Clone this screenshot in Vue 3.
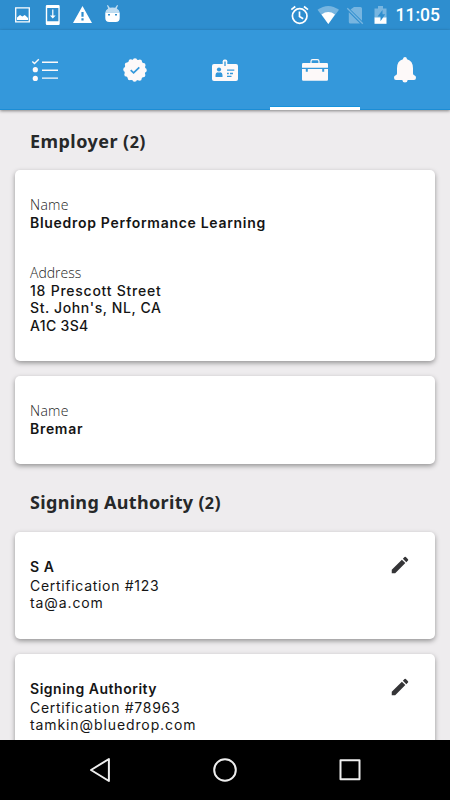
<template>
  <div class="screen">
    <!-- Status bar -->
    <header class="status-bar">
      <svg width="450" height="30" viewBox="0 0 450 30" fill="#fff">
        <path fill="none" stroke="#fff" stroke-width="1.3" d="M15.7 7.9h13.6v14H15.7z" />
        <path d="M17 20v-2.5l3-2.5 2.3 1.5 2.5-1.5 3.2 3v2z" />
        <path fill-rule="evenodd" d="M47 5h11.5q1.2 0 1.2 1.2v17.6q0 1.2-1.2 1.2H47q-1.2 0-1.2-1.2V6.200q0-1.200 1.200-1.200zm.2 3v13.300h11.200V8z" />
        <path d="M52.200 9.500h1.200v6h2.300l-2.900 3-2.900-3h2.300z" />
        <path fill-rule="evenodd" d="M82.500 6l9.500 17H73zM81.400 12v4.700h2.200V12zm0 6.200v2.200h2.200v-2.200z" />
        <path opacity=".7" d="M105.300 12.500q.2-2.600 2.900-4L107 5.500l.9-.4 1.900 2.700q2.700-.7 5.400 0l1.900-2.700.9.400-1.200 3q2.700 1.400 2.900 4z" />
        <path fill-rule="evenodd" d="M105.300 12.500h14.400V18q0 4-4 4h-6.400q-4 0-4-4zM108 13.900v1.600h2v-1.600zm7 0v1.600h2v-1.600z" />

        <g fill="none" stroke="#fff" stroke-width="1.700">
          <circle cx="299.700" cy="16" r="7.300" />
          <path d="M299.500 11.500v5l3.700 2.200M291.300 9.700l4-3.200M308 9.700l-4-3.200" />
        </g>
        <path opacity=".35" d="M317.500 9.800Q328.300 2.200 339 9.800L328.300 24z" />
        <path d="M321.500 14.500q6.800-4.800 13.500 0L328.300 24z" />
        <path opacity=".35" d="M354 7h6.500q1.500 0 1.500 1.500v12.300L350.500 9.600zM348.800 12.200L360 23.500h-9.700q-1.500 0-1.500-1.500z" />
        <path opacity=".35" fill="none" stroke="#fff" stroke-width="1.300" d="M347.300 8.300l15.500 15.500" />
        <path opacity=".35" d="M374.500 8.500H378V6h5v2.500h3.500V18h-12z" />
        <path d="M374.500 17.500h12v6.300h-12z" />
        <path fill="#2e8ecf" d="M382.500 10v4.200h2.700l-4.700 7v-4.700h-3z" />
      </svg>
      <span class="status-bar__clock">11:05</span>
    </header>

    <!-- Tabs -->
    <nav class="tabs">
      <a v-for="tab in tabs" :key="tab" :class="['tab', { active: tab === activeTab }]" @click="activeTab = tab">
        <svg v-if="tab === 'list'" width="28" height="28" viewBox="0 0 28 28" fill="#fdf9f9">
          <path fill="none" stroke="#fdf9f9" stroke-width="1.400" d="M1.300 5.500l2.200 2.100 4.300-4.300M11 6.300h16M11 14.200h16M11 22.100h16" />
          <circle cx="4.300" cy="13.700" r="2.600" />
          <circle cx="4.300" cy="22.400" r="2.600" />
        </svg>
        <svg v-else-if="tab === 'badge'" width="28" height="28" viewBox="0 0 28 28" fill="#fdf9f9">
          <circle cx="14" cy="14" r="10.600" />
          <path fill="none" stroke="#fdf9f9" stroke-width="4.400" stroke-linecap="round" stroke-dasharray="0 5.027" d="M14 4.400a9.600 9.600 0 1 1-.01 0z" />
          <path fill="none" stroke="#3498db" stroke-width="1.700" d="M9.700 14.200l2.900 2.700 5.700-5.600" />
        </svg>
        <svg v-else-if="tab === 'card'" width="28" height="28" viewBox="0 0 28 28">
          <rect x="1" y="8" width="26" height="17" rx="2" fill="#fdf9f9" />
          <rect x="11.700" y="3.500" width="4.600" height="7.200" rx="1.800" fill="#fdf9f9" />
          <path stroke="#3498db" stroke-width="1.300" d="M14 5.500v4.500M16 14.200h7.300M16 17.500h1.800M19 17.500h3M16 20.300h4.500" />
          <circle cx="8" cy="13.500" r="2.100" fill="#3498db" />
          <path fill="#3498db" d="M4.500 20.900v-2q0-2.400 2.300-2.700 1.200.5 2.400 0 2.300.3 2.300 2.700v2z" />
        </svg>
        <svg v-else-if="tab === 'case'" width="28" height="28" viewBox="0 0 28 28" fill="#fdf9f9">
          <path fill="none" stroke="#fdf9f9" stroke-width="1.200" d="M10 7V5.400Q10 3.700 11.700 3.700h4.600Q18 3.700 18 5.400V7" />
          <path d="M2.200 7h23.600Q27 7 27 8.200v3.600H1V8.200Q1 7 2.200 7z" />
          <path d="M1 13h3.800v2.800h2V13h14.400v2.800h2V13H27v10.500q0 1.200-1.200 1.200H2.200Q1 24.700 1 23.500z" />
        </svg>
        <svg v-else width="28" height="28" viewBox="0 0 28 28" fill="#fdf9f9">
          <path d="M14 1.100q1.700 0 2.100 2.100 5.900 1.700 5.900 9v5.300q0 1.700 1.700 1.900 1.300.4 1.300 2.300 0 2.300-2 2.300h-6.300q-.3 2.600-2.700 2.600T11.300 24H5q-2 0-2-2.300 0-1.900 1.300-2.300Q6 19.200 6 17.500v-5.300q0-7.300 5.900-9 .4-2.100 2.100-2.100z" />
        </svg>
      </a>
    </nav>

    <main class="content">
      <h2 class="heading heading--employer">Employer (<span>2</span>)</h2>

      <article v-for="employer in employers" :key="employer.name" class="card">
        <div class="field">
          <p class="field__label field__label--name">Name</p>
          <p class="field__value">{{ employer.name }}</p>
        </div>
        <div v-if="employer.address" class="field">
          <p class="field__label">Address</p>
          <p v-for="line in employer.address" :key="line" class="field__value field__value--line">{{ line }}</p>
        </div>
      </article>

      <h2 class="heading heading--authority">Signing Authority (<span>2</span>)</h2>

      <article v-for="authority in authorities" :key="authority.email" class="card card--authority">
        <div>
          <p class="authority__name">{{ authority.name }}</p>
          <p class="authority__line">Certification #{{ authority.certification }}</p>
          <p class="authority__line authority__line--email">{{ authority.email }}</p>
        </div>
        <svg class="edit" width="22" height="22" viewBox="0 0 24 24" fill="#353537">
          <path d="M3 17.250V21h3.750L17.810 9.940l-3.750-3.750L3 17.250zM20.710 7.040a1 1 0 0 0 0-1.410l-2.340-2.340a1 1 0 0 0-1.410 0l-1.830 1.830 3.750 3.750 1.830-1.830z" />
        </svg>
      </article>
    </main>

    <!-- System navigation -->
    <footer class="nav-bar">
      <svg width="450" height="60" viewBox="0 0 450 60" fill="none" stroke="#eee" stroke-width="2" stroke-linejoin="round">
        <path d="M108.900 19v22L91 30z" />
        <circle cx="225" cy="30" r="10.800" />
        <path d="M340.500 20.300h19v19h-19z" />
      </svg>
    </footer>
  </div>
</template>

<script setup>
import { ref } from 'vue'

const tabs = ['list', 'badge', 'card', 'case', 'bell']
const activeTab = ref('case')

const employers = [
  {
    name: 'Bluedrop Performance Learning',
    address: ['18 Prescott Street', "St. John's, NL, CA", 'A1C 3S4'],
  },
  { name: 'Bremar' },
]

const authorities = [
  { name: 'S A', certification: '123', email: 'ta@a.com' },
  { name: 'Signing Authority', certification: '78963', email: 'tamkin@bluedrop.com' },
]
</script>

<style>
body {
  margin: 0;
}
</style>

<style scoped>
.screen {
  display: flex;
  flex-direction: column;
  width: 450px;
  height: 800px;
  overflow: hidden;
  background: #eeecee;
  color: #151515;
  font-family: Inter, "Liberation Sans", sans-serif;
}

p,
h2 {
  margin: 0;
  white-space: nowrap;
}

svg {
  display: block;
}

.status-bar {
  position: relative;
  flex: none;
  height: 30px;
  background: #2e8ecf;
}

.status-bar__clock {
  position: absolute;
  right: 10px;
  top: 0;
  color: #fff;
  font: 500 17.5px/31px Roboto, sans-serif;
}

.tabs {
  position: relative;
  flex: none;
  display: grid;
  grid-template-columns: repeat(5, 1fr);
  height: 80px;
  box-sizing: border-box;
  background: #3498db;
  border-bottom: 1px solid #1b8dd5;
  box-shadow: 0 1px 3px rgba(0, 0, 0, 0.45);
}

.tab {
  display: flex;
  justify-content: center;
  height: 80px;
  padding-top: 26px;
  box-sizing: border-box;
}

.tab.active {
  border-bottom: 3px solid #fff;
  box-shadow: inset 0 -1px #1593dd;
}

.content {
  flex: 1;
  min-height: 0;
  overflow: hidden;
  padding: 0 15px;
}

.heading {
  padding-left: 15px;
  color: #262829;
  font: 700 18px/60px "Noto Sans", sans-serif;
  height: 60px;
}

.heading span {
  font-size: 0.9em;
}

.heading--employer {
  line-height: 62px;
  letter-spacing: 0.45px;
}

.heading--authority {
  height: 68px;
  line-height: 77px;
  letter-spacing: 0.32px;
}

.card {
  box-sizing: border-box;
  padding: 25px 15px 26px;
  background: #fff;
  border-radius: 5px;
  box-shadow: 0 2px 5px rgba(0, 0, 0, 0.38);
}

.card + .card {
  margin-top: 15px;
}

.field + .field {
  margin-top: 31px;
}

.field__label {
  color: #1c1c1c;
  font: 300 14px/19px "Open Sans", sans-serif;
}

.field__label--name {
  letter-spacing: 0.3px;
}

.field__value {
  font-size: 14px;
  font-weight: 600;
  line-height: 17.700px;
  letter-spacing: 0.7px;
}

.field__value--line {
  font-weight: 500;
  letter-spacing: 0.76px;
}

.field__value--line:nth-child(3) {
  letter-spacing: 0.6px;
}

.field__value--line:nth-child(4) {
  letter-spacing: 0.35px;
}

.card--authority {
  display: flex;
  justify-content: space-between;
  align-items: flex-start;
  height: 107px;
}

.authority__name {
  font-size: 14px;
  font-weight: 600;
  line-height: 20px;
  letter-spacing: 0.52px;
}

.authority__line {
  font-size: 14px;
  line-height: 17.700px;
  letter-spacing: 0.7px;
}

.authority__line--email {
  letter-spacing: 0.9px;
}

.edit {
  margin: -3px 9px 0 0;
}

.nav-bar {
  flex: none;
  height: 60px;
  background: #000;
}
</style>
